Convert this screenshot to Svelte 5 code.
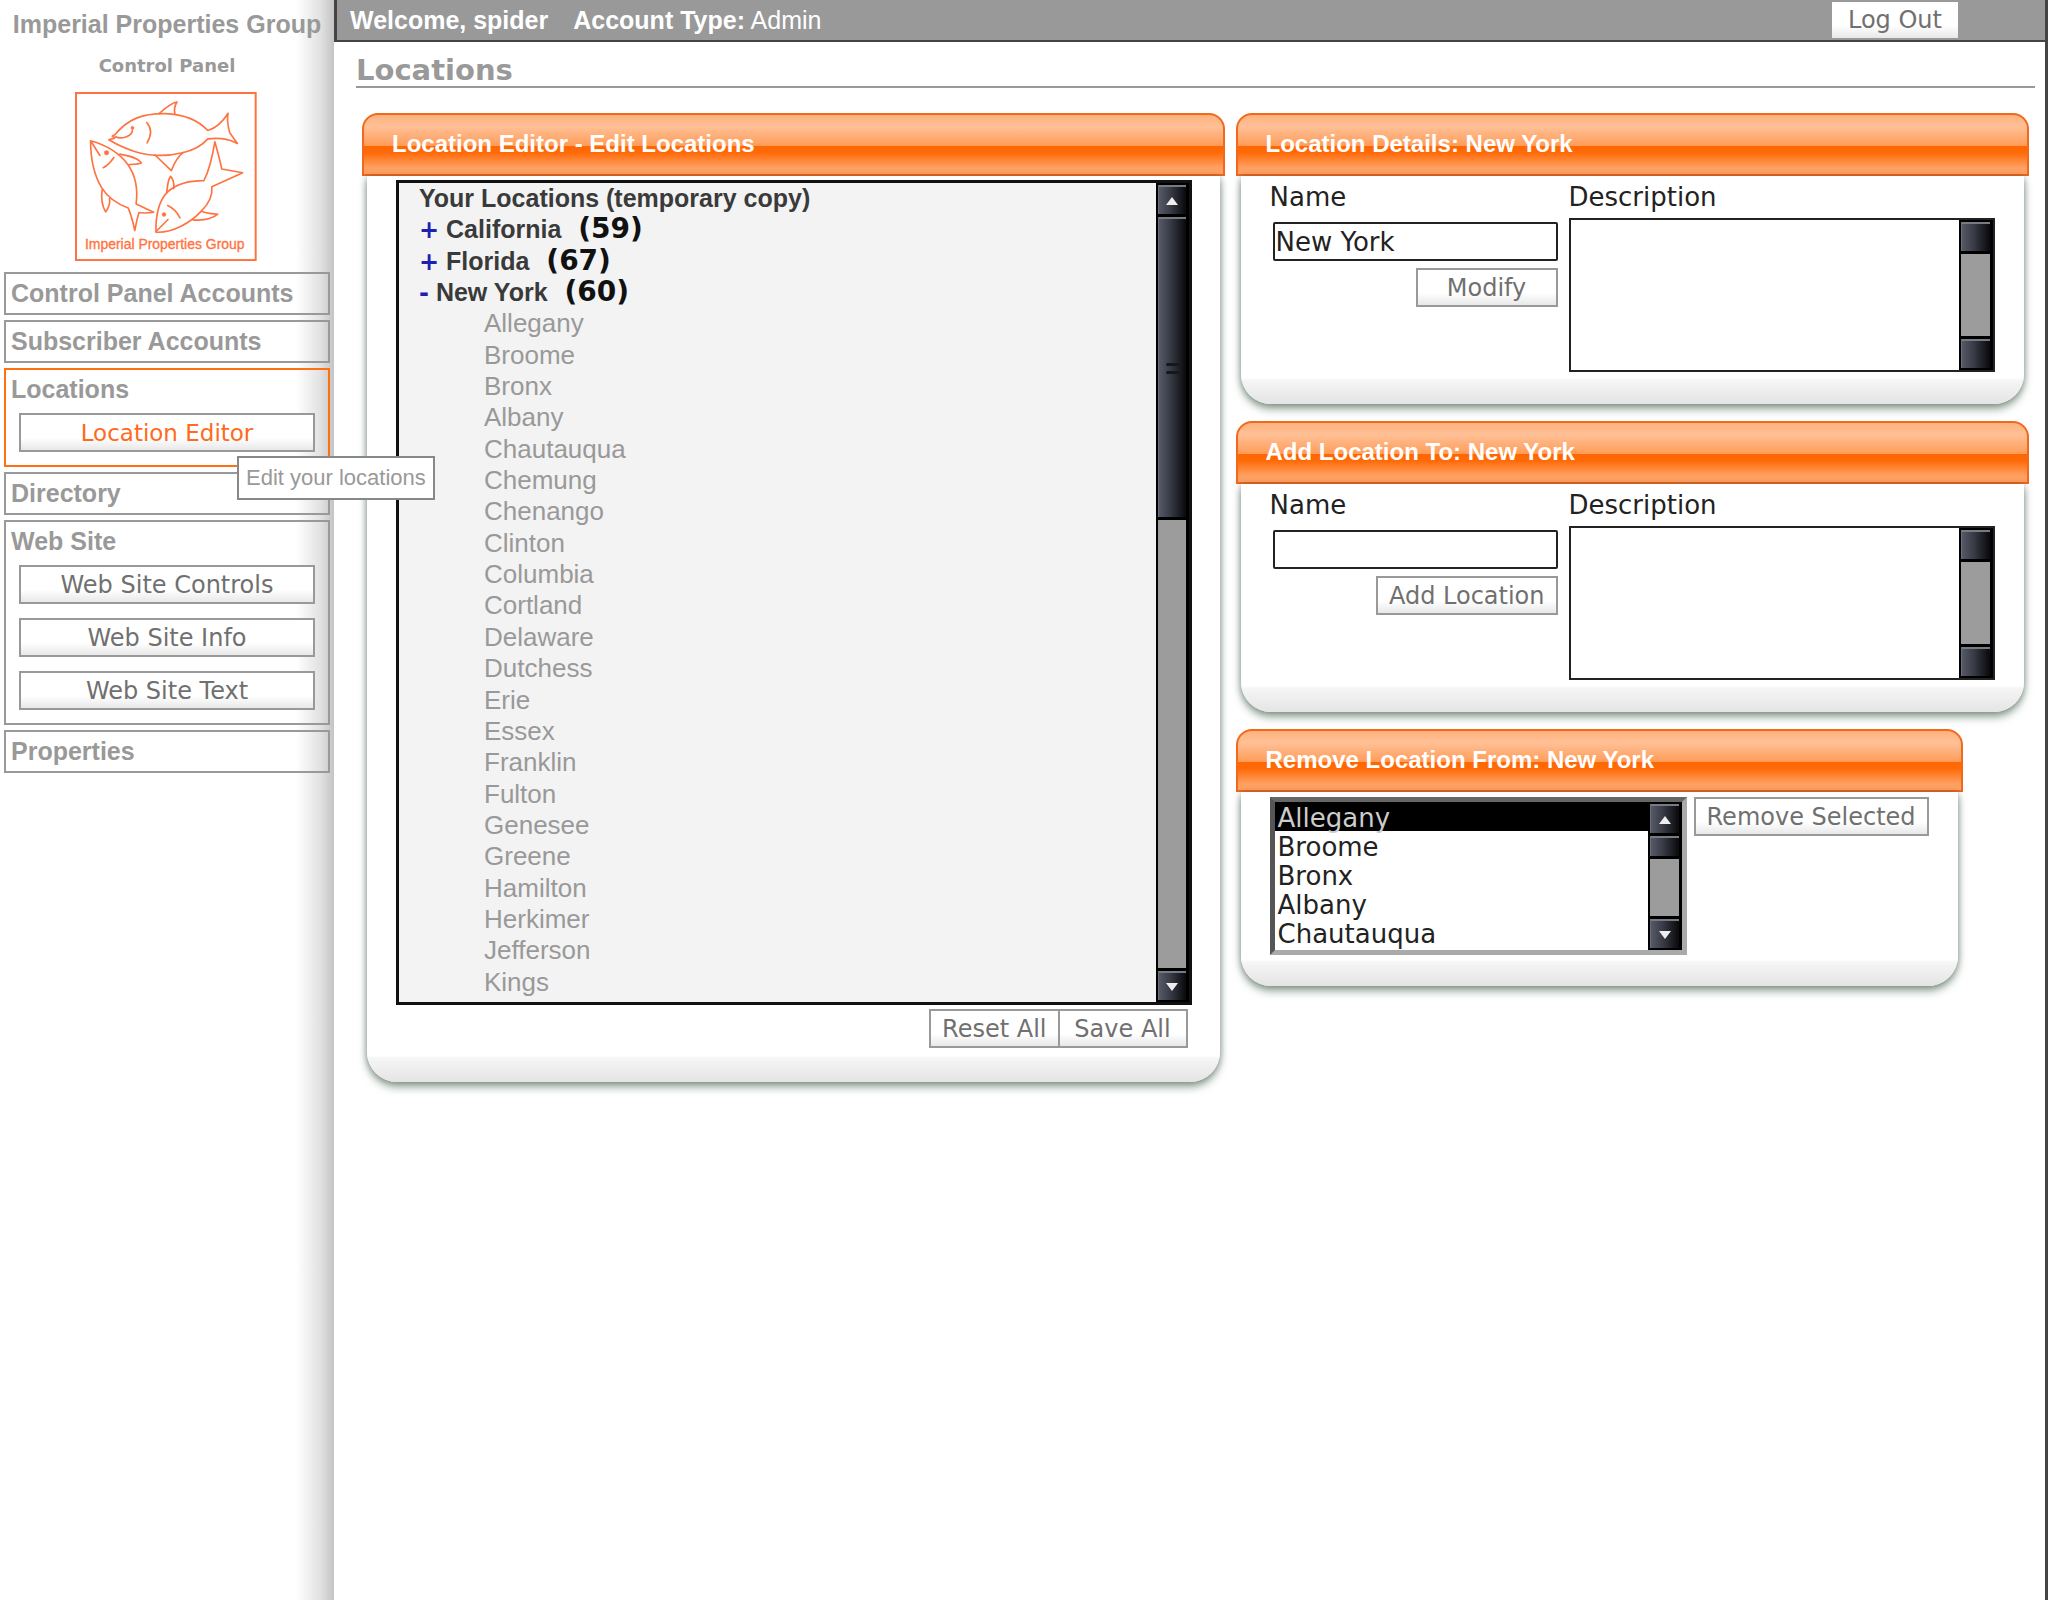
<script lang="ts">
	interface MenuGroup {
		title: string;
		items?: string[];
		active?: string;
		tip?: string;
	}

	const menu: MenuGroup[] = [
		{ title: 'Control Panel Accounts' },
		{ title: 'Subscriber Accounts' },
		{
			title: 'Locations',
			items: ['Location Editor'],
			active: 'Location Editor',
			tip: 'Edit your locations'
		},
		{ title: 'Directory' },
		{ title: 'Web Site', items: ['Web Site Controls', 'Web Site Info', 'Web Site Text'] },
		{ title: 'Properties' }
	];

	const states = [
		{ name: 'California', count: 59 },
		{ name: 'Florida', count: 67 },
		{ name: 'New York', count: 60 }
	];

	const counties = [
		'Allegany',
		'Broome',
		'Bronx',
		'Albany',
		'Chautauqua',
		'Chemung',
		'Chenango',
		'Clinton',
		'Columbia',
		'Cortland',
		'Delaware',
		'Dutchess',
		'Erie',
		'Essex',
		'Franklin',
		'Fulton',
		'Genesee',
		'Greene',
		'Hamilton',
		'Herkimer',
		'Jefferson',
		'Kings'
	];

	let current = $state('New York');
	let name = $state('New York');
	let description = $state('');
	let newName = $state('');
	let newDescription = $state('');
	let removed = $state('Allegany');
</script>

{#snippet scrollbar(thumb: number, arrows: boolean, grip: boolean)}
	<div class="scrollbar" aria-hidden="true">
		<div class="sb-button">
			{#if arrows}<svg viewBox="0 0 12 8"><path d="M6 0 12 8H0z" /></svg>{/if}
		</div>
		<div class="sb-track">
			{#if thumb}
				<div class="sb-thumb" style="height:{thumb}%">
					{#if grip}<i></i><i></i>{/if}
				</div>
			{/if}
		</div>
		<div class="sb-button">
			{#if arrows}<svg viewBox="0 0 12 8"><path d="M0 0H12L6 8z" /></svg>{/if}
		</div>
	</div>
{/snippet}

<div class="page">
	<aside class="sidebar">
		<div class="site-name">Imperial Properties Group</div>
		<div class="site-sub">Control Panel</div>
		<svg class="logo" viewBox="46 37 548 509" role="img" aria-label="Imperial Properties Group">
			<rect x="49" y="40" width="541" height="503" fill="#fff" />
			<g fill="none" stroke-width="5" stroke-linecap="round" stroke-linejoin="round">
				<!-- top fish -->
				<path
					d="M166 166C205 118 250 101 318 102C375 104 420 125 446 153C466 147 490 128 507 101C502 120 508 145 512 160L535 192C512 180 490 174 446 178C425 202 395 214 370 220C320 232 270 230 225 216C195 206 170 195 148 181C154 176 160 180 166 175L158 170C159 167 162 167 166 166M168 172C185 180 217 172 219 152"
				/>
				<path d="M300 101C318 85 335 70 353 67C345 80 344 92 347 104" />
				<path d="M286 226L336 274C345 250 355 232 372 219" />
				<path d="M262 129C278 147 278 165 263 190" />
				<!-- left fish -->
				<path
					d="M93 184C140 197 180 222 205 255C232 293 235 335 230 374L283 399C265 402 250 402 239 400C232 420 229 440 226 454C221 430 212 400 206 386C175 375 145 355 126 325C103 287 93 235 93 184Z"
				/>
				<path d="M95 187L121 228M131 265C142 259 153 249 163 234" />
				<path d="M181 224C205 230 232 232 246 250C232 258 220 252 208 256" />
				<path d="M128 330C124 355 128 380 138 398C148 385 152 370 150 358" />
				<!-- right fish -->
				<path
					d="M290 459C288 415 297 365 325 338C355 310 395 304 434 304C452 270 460 230 467 187C475 215 484 250 488 269L551 280L458 322C461 350 447 375 427 395C395 430 340 462 290 459Z"
				/>
				<path d="M290 457L326 421M325 379C345 388 354 400 362 416" />
				<path d="M322 341C325 320 325 300 334 291C342 300 345 315 343 328" />
				<path d="M427 396C440 403 460 403 476 405C455 422 425 424 401 422" />
			</g>
			<g class="eyes">
				<circle cx="219" cy="145" r="5" />
				<circle cx="141" cy="220" r="7" />
				<circle cx="314" cy="406" r="6" />
			</g>
			<text x="76" y="510">Imperial Properties Group</text>
			<rect x="49" y="40" width="541" height="503" fill="none" stroke-width="6" />
		</svg>

		<nav class="menu">
			{#each menu as group}
				<div class="menu-group" class:open={group.items} class:active={group.active}>
					<a href="#top" class="menu-title">{group.title}</a>
					{#each group.items ?? [] as item}
						<button type="button" class="btn" class:current={item === group.active}>{item}</button>
					{/each}
					{#if group.tip}
						<div class="tooltip" role="tooltip">{group.tip}</div>
					{/if}
				</div>
			{/each}
		</nav>
	</aside>

	<div class="main">
		<header class="topbar">
			<b>Welcome, spider</b>
			<span><b>Account Type:</b> Admin</span>
			<button type="button" class="btn logout">Log Out</button>
		</header>

		<main class="content">
			<h1>Locations</h1>

			<div class="columns">
				<section class="panel">
					<h2>Location Editor - Edit Locations</h2>
					<div class="panel-body editor">
						<div class="tree-box">
							<ul class="tree">
								<li class="root">Your Locations (temporary copy)</li>
								{#each states as state}
									<li class="state">
										<button type="button" class="toggle" onclick={() => (current = state.name)}
											>{state.name === current ? '-' : '+'}</button
										>
										{state.name} <span class="count">({state.count})</span>
									</li>
								{/each}
								{#each counties as county}
									<li class="county">{county}</li>
								{/each}
							</ul>
							{@render scrollbar(40, true, true)}
						</div>
						<div class="actions">
							<button type="button" class="btn">Reset All</button>
							<button type="button" class="btn">Save All</button>
						</div>
					</div>
				</section>

				<div class="side">
					<section class="panel">
						<h2>Location Details: {current}</h2>
						<form class="panel-body form">
							<div class="field">
								<label for="name">Name</label>
								<input id="name" type="text" bind:value={name} />
								<button type="button" class="btn modify">Modify</button>
							</div>
							<div class="field wide">
								<label for="description">Description</label>
								<div class="area">
									<textarea id="description" bind:value={description}></textarea>
									{@render scrollbar(0, false, false)}
								</div>
							</div>
						</form>
					</section>

					<section class="panel">
						<h2>Add Location To: {current}</h2>
						<form class="panel-body form">
							<div class="field">
								<label for="new-name">Name</label>
								<input id="new-name" type="text" bind:value={newName} />
								<button type="button" class="btn">Add Location</button>
							</div>
							<div class="field wide">
								<label for="new-description">Description</label>
								<div class="area">
									<textarea id="new-description" bind:value={newDescription}></textarea>
									{@render scrollbar(0, false, false)}
								</div>
							</div>
						</form>
					</section>

					<section class="panel fit">
						<h2>Remove Location From: {current}</h2>
						<form class="panel-body remove">
							<div class="list-box">
								<select size="5" aria-label="Location to remove" bind:value={removed}>
									{#each counties as county}
										<option>{county}</option>
									{/each}
								</select>
								{@render scrollbar(25, true, false)}
							</div>
							<button type="button" class="btn">Remove Selected</button>
						</form>
					</section>
				</div>
			</div>
		</main>
	</div>
</div>

<style>
	:global(body) {
		margin: 0;
		background: #fff;
	}

	.page {
		--sans: 'Liberation Sans', Arial, sans-serif;
		--wide: 'DejaVu Sans', Verdana, sans-serif;
		display: flex;
		min-height: 100vh;
		font-family: var(--sans);
		font-size: 25px;
		color: #3a3a3a;
	}

	.page * {
		box-sizing: border-box;
	}

	.sidebar {
		flex: 0 0 334px;
		padding: 8px 4px 0 4px;
		background: linear-gradient(to left, #c4c4c4, #e2e2e2 14px, #fff 38px);
		text-align: center;
		font-weight: bold;
		color: #999;
	}

	.site-name {
		line-height: 32px;
		white-space: nowrap;
	}

	.site-sub {
		margin-top: 12px;
		font: bold 18px/28px var(--wide);
	}

	.logo {
		display: block;
		width: 182px;
		margin: 12px auto 11px 71px;
		stroke: #ff7340;
	}

	.logo .eyes,
	.logo text {
		fill: #ff7340;
	}

	.logo text {
		font: 42px var(--sans);
		stroke-width: 1;
	}

	.menu {
		display: flex;
		flex-direction: column;
		gap: 5px;
		text-align: left;
	}

	.menu-group {
		position: relative;
		display: flex;
		flex-direction: column;
		border: 2px solid #999;
	}

	.menu-group.open {
		gap: 14px;
		padding-bottom: 13px;
	}

	.menu-group.active {
		border-color: #ff7010;
	}

	.menu-title {
		padding-left: 5px;
		line-height: 39px;
		color: #999;
		text-decoration: none;
	}

	.menu-title + .btn {
		margin-top: -10px;
	}

	.menu-group .btn {
		margin-left: 13px;
		margin-right: 13px;
	}

	.btn {
		height: 39px;
		padding: 0 11px;
		border: 2px solid #999;
		border-radius: 0;
		background: linear-gradient(#fff 65%, #e8e8e8);
		font: 24px/32px var(--wide);
		color: #707070;
		white-space: nowrap;
		cursor: pointer;
	}

	.menu-group .current {
		font-size: 23px;
		color: #ff6a1c;
	}

	.tooltip {
		position: absolute;
		z-index: 2;
		left: 231px;
		top: 86px;
		padding: 0 7px;
		border: 2px solid #888;
		background: #fff;
		font-size: 22px;
		font-weight: normal;
		line-height: 40px;
		color: #999;
		white-space: nowrap;
	}

	.main {
		flex: 1;
		min-width: 0;
		border-right: 3px solid #444;
	}

	.topbar {
		display: flex;
		align-items: center;
		gap: 25px;
		height: 42px;
		padding: 0 87px 0 13px;
		border-left: 3px solid #444;
		border-bottom: 2px solid #444;
		background: #999;
		color: #fff;
	}

	.logout {
		height: 36px;
		margin-left: auto;
		padding: 0 16px;
		border: 0;
	}

	.content {
		padding: 13px 10px 0 22px;
	}

	h1 {
		margin: 0 0 25px;
		border-bottom: 2px solid #999;
		font: bold 29px/31px var(--wide);
		color: #999;
	}

	.columns {
		display: grid;
		grid-template-columns: 862fr 793fr;
		align-items: start;
		gap: 11px;
		padding: 0 6px;
	}

	.side {
		display: flex;
		flex-direction: column;
		gap: 17px;
	}

	.panel.fit {
		align-self: flex-start;
	}

	h2 {
		margin: 0;
		padding: 0 28px 2px;
		border: 2px solid #f2681c;
		border-radius: 16px 16px 0 0;
		background: linear-gradient(
			#ffb27e,
			#ffc096 20%,
			#ff9c58 52%,
			#ff6600 53%,
			#ff6a08 64%,
			#ff9e5e 88%,
			#ffa568
		);
		font-size: 24px;
		line-height: 57px;
		color: #fff;
	}

	.panel-body {
		margin: 0 5px;
		border-radius: 0 0 30px 30px;
		background: linear-gradient(to top, #e4e4e4, #f6f6f6 24px, #fff 26px);
		box-shadow:
			0 0 6px rgba(0, 0, 0, 0.25),
			0 5px 9px rgba(90, 120, 100, 0.65);
	}

	.editor {
		padding: 4px 28px 34px 29px;
	}

	.tree-box {
		display: flex;
		height: 825px;
		border: 3px solid #111;
		background: #f3f3f3;
	}

	.tree {
		flex: 1;
		display: flex;
		flex-direction: column;
		margin: 0;
		padding: 0 0 4px;
		list-style: none;
	}

	.tree li {
		flex: 1;
		line-height: 30px;
		white-space: nowrap;
	}

	.tree .root,
	.tree .state {
		padding-left: 20px;
		font-weight: bold;
	}

	.tree .county {
		padding-left: 85px;
		font-size: 26px;
		color: #999;
	}

	.toggle {
		padding: 0;
		border: 0;
		background: none;
		font: bold 24px/24px var(--wide);
		color: #1f1fb4;
		cursor: pointer;
	}

	.count {
		margin-left: 10px;
		font: bold 28px/24px var(--wide);
		color: #111;
	}

	.actions {
		display: flex;
		justify-content: flex-end;
		padding: 4px 4px 0 0;
	}

	.actions .btn {
		min-width: 130px;
	}

	.actions .btn + .btn {
		margin-left: -2px;
	}

	.form {
		display: flex;
		gap: 11px;
		padding: 4px 29px 32px;
		font: 26px/34px var(--wide);
		color: #222;
	}

	.field {
		display: flex;
		flex-direction: column;
		align-items: flex-end;
		flex: 0 0 288px;
	}

	.field.wide {
		flex: 1;
		align-items: stretch;
	}

	.field label {
		align-self: flex-start;
		margin-bottom: 4px;
	}

	.field .btn {
		margin-top: 7px;
	}

	.modify {
		min-width: 142px;
	}

	input {
		width: 285px;
		height: 39px;
		margin: 4px 0 0;
		padding: 0 1px;
		border: 2px solid #222;
		border-radius: 2px;
		background: #fff;
		font: 26px/30px var(--wide);
		color: #222;
	}

	.area {
		display: flex;
		height: 154px;
		border: 2px solid #222;
		background: #fff;
	}

	textarea {
		flex: 1;
		min-width: 0;
		padding: 2px;
		border: 0;
		resize: none;
		background: none;
		font: 26px/30px var(--wide);
	}

	.remove {
		display: flex;
		align-items: flex-start;
		gap: 7px;
		padding: 5px 29px 31px;
	}

	.list-box {
		display: flex;
		width: 417px;
		height: 158px;
		border: 5px solid;
		border-color: #666 #aaa #aaa #555;
		background: #fff;
	}

	select {
		flex: 1;
		min-width: 0;
		margin: 0;
		padding: 0;
		border: 0;
		border-radius: 0;
		outline: 0;
		background: #fff;
		overflow: hidden;
		scrollbar-width: none;
		font: 26px/29px var(--wide);
		color: #222;
	}

	option {
		height: 29px;
		min-height: 29px;
		padding: 1px 3px 0;
		line-height: 29px;
	}

	option:checked {
		background: #000 linear-gradient(#000, #000);
		-webkit-text-fill-color: #ccc;
	}

	.scrollbar {
		flex: 0 0 33px;
		display: flex;
		flex-direction: column;
		gap: 3px;
		padding: 2px 3px 2px 2px;
		background: #000;
	}

	.list-box .scrollbar,
	.area .scrollbar {
		flex-basis: 34px;
	}

	.sb-button,
	.sb-thumb {
		border-top: 2px solid #777b84;
		border-left: 1px solid #6b6e78;
		background: linear-gradient(to right, #555966, #3a3d48 40%, #0d0d10 95%);
	}

	.sb-button {
		flex: 0 0 29px;
		display: flex;
		align-items: center;
		justify-content: center;
	}

	.sb-button svg {
		width: 12px;
		height: 8px;
		fill: #eee;
	}

	.sb-track {
		flex: 1;
		background: #9c9c9c;
	}

	.sb-thumb {
		display: flex;
		flex-direction: column;
		align-items: center;
		justify-content: center;
		gap: 5px;
		box-shadow: 0 3px #000;
	}

	.sb-thumb i {
		width: 13px;
		height: 3px;
		border-radius: 2px;
		background: #16171b;
	}
</style>
